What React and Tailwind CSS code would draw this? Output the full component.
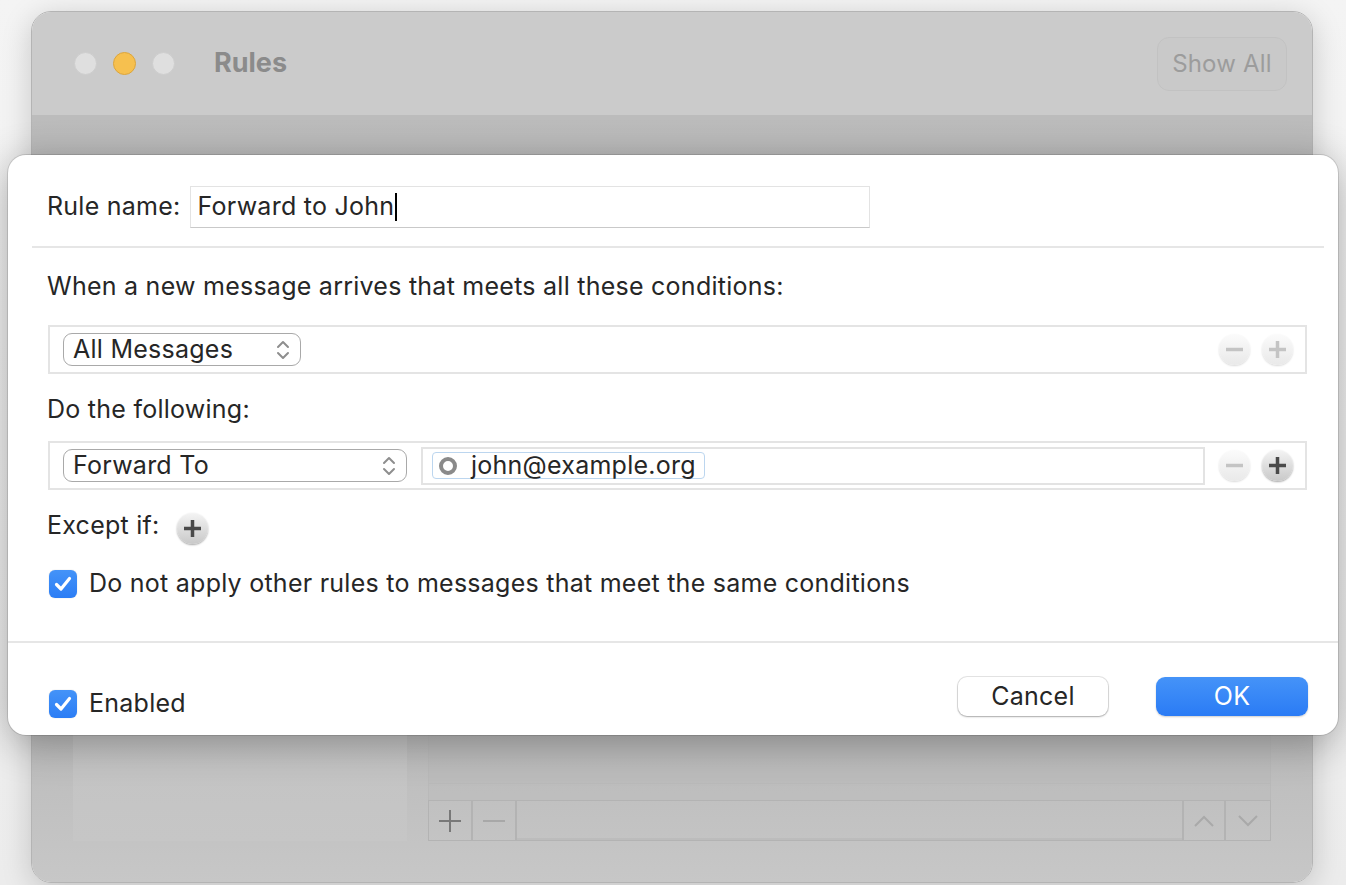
import React from "react";

const font = { fontFamily: "Inter, 'Noto Sans', sans-serif" };

const Chevrons = () => (
  <svg width="16" height="24" viewBox="0 0 16 24" fill="none">
    <path d="M3 9 L8 4 L13 9" stroke="#8e8e8e" strokeWidth="2" strokeLinecap="round" strokeLinejoin="round" />
    <path d="M3 15 L8 20 L13 15" stroke="#8e8e8e" strokeWidth="2" strokeLinecap="round" strokeLinejoin="round" />
  </svg>
);

const PopUp = ({ label, width }) => (
  <div
    className="flex h-[33px] items-center justify-between rounded-[9px] border-[1.5px] border-[#a9a9a9] bg-white pl-[9px] pr-[9px] leading-none text-[#262626]"
    style={{ width }}
  >
    <span>{label}</span>
    <Chevrons />
  </div>
);

const RoundButton = ({ kind, active }) => (
  <div
    className={
      active
        ? "flex h-[31px] w-[31px] items-center justify-center rounded-full bg-gradient-to-b from-[#f4f4f4] to-[#c9c9c9] shadow-[0_1px_2px_rgba(0,0,0,0.35)]"
        : "flex h-[31px] w-[31px] items-center justify-center rounded-full bg-gradient-to-b from-[#fbfbfb] to-[#e9e9e9] shadow-[0_1px_2px_rgba(0,0,0,0.15)]"
    }
  >
    <svg width="19" height="19" viewBox="0 0 19 19">
      <path d="M1 9.5 H18" stroke={active ? "#4a4a4a" : "#c4c4c4"} strokeWidth="3.5" />
      {kind === "plus" && (
        <path d="M9.5 1 V18" stroke={active ? "#4a4a4a" : "#c4c4c4"} strokeWidth="3.5" />
      )}
    </svg>
  </div>
);

const Checkbox = () => (
  <div className="flex h-[28px] w-[28px] items-center justify-center rounded-[6px] bg-gradient-to-b from-[#4493f8] to-[#2b7df5] shadow-[0_0_1px_rgba(0,0,0,0.3)]">
    <svg width="18" height="16" viewBox="0 0 18 16" fill="none">
      <path d="M2.5 8.5 L7 13 L15.5 2.5" stroke="white" strokeWidth="3.2" strokeLinecap="round" strokeLinejoin="round" />
    </svg>
  </div>
);

const BackWindow = () => (
  <div className="ml-[31px] mt-[10px] flex h-[872px] w-[1282px] flex-col overflow-hidden rounded-[20px] border border-[#b4b4b4] shadow-[0_6px_30px_rgba(0,0,0,0.18)]">
    <div className="flex h-[105px] shrink-0 items-center border-b-2 border-[#bcbcbc] bg-[#cbcbcb] pl-[42px] pr-[25px]">
      <div className="flex items-center gap-[16px]">
        <span className="h-[23px] w-[23px] rounded-full border border-[#cdcdcd] bg-[#dfdfdf]" />
        <span className="h-[23px] w-[23px] rounded-full border border-[#dca53c] bg-[#f6c04f]" />
        <span className="h-[23px] w-[23px] rounded-full border border-[#cdcdcd] bg-[#dfdfdf]" />
      </div>
      <span className="ml-[39px] text-[27px] font-bold text-[#8b8b8b]">Rules</span>
      <div className="ml-auto flex h-[54px] w-[130px] items-center justify-center rounded-[12px] border-[1.5px] border-[#c2c2c2] bg-[#c9c9c9] text-[24px] tracking-[0.2px] text-[#9c9c9c]">
        Show All
      </div>
    </div>
    <div className="flex flex-1 items-end gap-[21px] bg-gradient-to-b from-[#bcbcbc] via-[#a9a9a9] to-[#c7c7c7] pb-[41px] pl-[41px] pr-[41px]">
      <div className="h-[660px] w-[334px] bg-gradient-to-b from-[#b3b3b3] to-[#c6c6c6]" />
      <div className="flex h-[660px] flex-1 flex-col">
        <div className="flex-1 border-x border-[#b9b9b9] bg-[#b9b9b9]/40" />
        <div className="h-[17px] border-x border-t border-[#b9b9b9] bg-[#bdbdbd]/60" />
        <div className="flex h-[41px] border border-[#b3b3b3]">
          <div className="flex w-[44px] items-center justify-center border-r-2 border-[#b3b3b3]">
            <svg width="24" height="24" viewBox="0 0 24 24">
              <path d="M12 1 V23 M1 12 H23" stroke="#787878" strokeWidth="2" />
            </svg>
          </div>
          <div className="flex w-[44px] items-center justify-center border-r-2 border-[#b3b3b3]">
            <svg width="24" height="24" viewBox="0 0 24 24">
              <path d="M1 12 H23" stroke="#a8a8a8" strokeWidth="2" />
            </svg>
          </div>
          <div className="flex-1 border-b-2 border-[#bcbcbc]" />
          <div className="flex w-[44px] items-center justify-center border-x-2 border-[#b3b3b3]">
            <svg width="22" height="14" viewBox="0 0 22 14" fill="none">
              <path d="M2 12 L11 3 L20 12" stroke="#a9a9a9" strokeWidth="2" />
            </svg>
          </div>
          <div className="flex w-[44px] items-center justify-center">
            <svg width="22" height="14" viewBox="0 0 22 14" fill="none">
              <path d="M2 2 L11 11 L20 2" stroke="#a9a9a9" strokeWidth="2" />
            </svg>
          </div>
        </div>
      </div>
    </div>
  </div>
);

const Sheet = () => (
  <div className="absolute left-[8px] top-[155px] flex h-[580px] w-[1330px] flex-col rounded-[18px] bg-white text-[25px] tracking-[0.25px] text-[#262626] shadow-[0_8px_40px_rgba(0,0,0,0.3),0_0_0_1px_rgba(0,0,0,0.12)]">
    <div className="flex items-center pl-[39px] pt-[31px]">
      <span>Rule name:</span>
      <div className="ml-[9px] flex h-[42px] w-[680px] items-center border border-[#e3e3e3] border-b-[#c9c9c9] pl-[7px]">
        <span>Forward to John</span>
        <span className="ml-[1px] h-[28px] w-[2px] bg-black" />
      </div>
    </div>

    <div className="ml-[24px] mr-[14px] mt-[18px] h-[2px] bg-[#e6e6e6]" />

    <div className="mt-[22px] h-[32px] pl-[39px] leading-[32px]">
      When a new message arrives that meets all these conditions:
    </div>

    <div className="ml-[40px] mr-[31px] mt-[23px] flex h-[49px] items-center border-2 border-[#e4e4e4] pl-[13px] pr-[12px]">
      <PopUp label="All Messages" width={238} />
      <div className="ml-auto flex gap-[12px]">
        <RoundButton kind="minus" />
        <RoundButton kind="plus" />
      </div>
    </div>

    <div className="mt-[19px] h-[32px] pl-[39px] leading-[32px]">Do the following:</div>

    <div className="ml-[40px] mr-[31px] mt-[16px] flex h-[49px] items-center border-2 border-[#e4e4e4] pl-[13px] pr-[12px]">
      <PopUp label="Forward To" width={344} />
      <div className="ml-[14px] flex h-[38px] w-[784px] items-center border-2 border-[#e3e3e3] pl-[9px]">
        <div className="flex h-[27px] items-center rounded-[4px] border-[1.5px] border-[#bcd6ef] pl-[5px] pr-[8px] leading-none">
          <svg width="20" height="20" viewBox="0 0 20 20" fill="none">
            <circle cx="10" cy="10" r="7" stroke="#8a8a8a" strokeWidth="4" />
          </svg>
          <span className="ml-[13px]">john@example.org</span>
        </div>
      </div>
      <div className="ml-auto flex gap-[12px]">
        <RoundButton kind="minus" />
        <RoundButton kind="plus" active />
      </div>
    </div>

    <div className="mt-[20px] flex h-[32px] items-center pl-[39px]">
      <span>Except if:</span>
      <div className="ml-[17px] mt-[4px]">
        <RoundButton kind="plus" active />
      </div>
    </div>

    <div className="mt-[26px] flex h-[32px] items-center pl-[41px]">
      <Checkbox />
      <span className="ml-[12px]">Do not apply other rules to messages that meet the same conditions</span>
    </div>

    <div className="mt-[41px] h-[2px] bg-[#e6e6e6]" />

    <div className="flex flex-1 items-start pl-[41px] pr-[30px] pt-[34px]">
      <div className="mt-[8px] flex items-center">
        <Checkbox />
        <span className="ml-[12px]">Enabled</span>
      </div>
      <div className="ml-auto flex gap-[48px]">
        <div className="flex h-[39px] w-[150px] items-center justify-center rounded-[9px] bg-white shadow-[0_0_0_1px_rgba(0,0,0,0.1),0_1px_2px_rgba(0,0,0,0.25)]">
          Cancel
        </div>
        <div className="flex h-[39px] w-[152px] items-center justify-center rounded-[9px] bg-gradient-to-b from-[#4593f8] to-[#2a7bf5] text-white shadow-[0_1px_2px_rgba(0,0,0,0.2)]">
          OK
        </div>
      </div>
    </div>
  </div>
);

export default function App() {
  return (
    <div
      className="relative h-[885px] w-[1346px] overflow-hidden bg-gradient-to-b from-[#f4f4f4] to-[#ececec] pt-px"
      style={font}
    >
      <BackWindow />
      <Sheet />
    </div>
  );
}
